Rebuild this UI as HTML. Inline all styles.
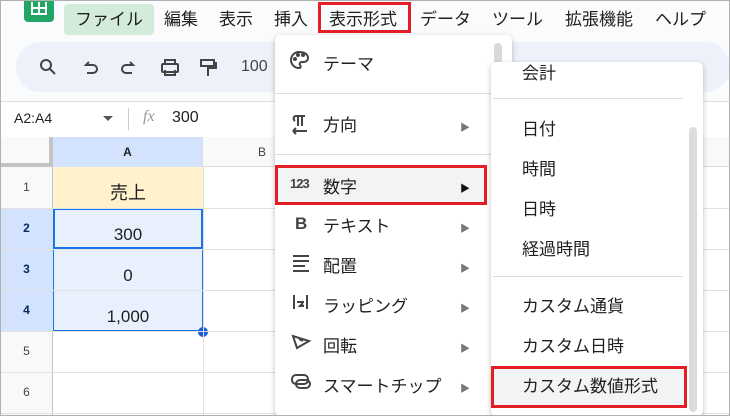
<!DOCTYPE html>
<html><head><meta charset="utf-8"><style>
*{box-sizing:border-box;margin:0;padding:0}
body{width:730px;height:416px;overflow:hidden;position:relative;background:#f9fbfd;font-family:"Liberation Sans","Noto Sans CJK JP",sans-serif;color:#1f1f1f}
.a{position:absolute}
.mb{font-size:17px;top:5px;color:#1f1f1f}
.frame{position:absolute;left:0;top:0;width:730px;height:416px;border:1px solid #b0b0b0;pointer-events:none}
.mi{position:absolute;left:0;width:100%;font-size:17px}
.arr{position:absolute;left:185px;font-size:10px;color:#777}
.sep{position:absolute;height:1px;background:#dadce0}
.rh{position:absolute;left:0;width:53px;font-size:12px;text-align:center;color:#444}
</style></head><body>
<div class="a" style="left:24px;top:0;width:30px;height:22px;background:#23a566;border-radius:0 0 4px 4px"></div>
<div class="a" style="left:31px;top:2px;width:16px;height:13px;border:2px solid #fff;border-top:none"></div>
<div class="a" style="left:31px;top:7px;width:16px;height:2px;background:#fff"></div>
<div class="a" style="left:38px;top:2px;width:2px;height:12px;background:#fff"></div>
<div class="a" style="left:64px;top:4px;width:90px;height:31px;background:#d3ebd9;border-radius:4px"></div>
<div class="a mb" style="left:75px">ファイル</div>
<div class="a mb" style="left:164px">編集</div>
<div class="a mb" style="left:219px">表示</div>
<div class="a mb" style="left:274px">挿入</div>
<div class="a mb" style="left:329px">表示形式</div>
<div class="a" style="left:318px;top:2px;width:93px;height:31px;border:3px solid #e31e24"></div>
<div class="a mb" style="left:420px">データ</div>
<div class="a mb" style="left:492px">ツール</div>
<div class="a mb" style="left:565px">拡張機能</div>
<div class="a mb" style="left:655px">ヘルプ</div>
<div class="a" style="left:16px;top:42px;width:714px;height:50px;background:#edf2fa;border-radius:25px"></div>
<svg class="a" style="left:36px;top:56px" width="240" height="24" viewBox="0 0 240 24" fill="none" stroke="#444" stroke-width="2">
<circle cx="10" cy="9" r="5"/><path d="M14 13l5 5"/>
<path d="M56 9h-6l3-3M50 9h7a4 4 0 010 8h-6"/>
<path d="M91 9h6l-3-3M97 9h-7a4 4 0 000 8h6"/>
<rect x="126" y="8" width="16" height="8" rx="1"/><path d="M129 8V4h10v4M129 14v5h10v-5"/>
<rect x="165" y="4" width="13" height="6"/><path d="M178 7h2v5h-8v3M172 15v5"/>
</svg>
<div class="a" style="left:241px;top:58px;font-size:16px;color:#444">100</div>
<div class="a" style="left:0;top:101px;width:730px;height:36px;background:#fff;border-top:1px solid #e0e0e0"></div>
<div class="a" style="left:14px;top:110px;font-size:14px">A2:A4</div>
<div class="a" style="left:103px;top:116px;border:5px solid transparent;border-top:5px solid #555"></div>
<div class="a" style="left:128px;top:108px;width:1px;height:22px;background:#ccc"></div>
<div class="a" style="left:143px;top:108px;font-size:16px;color:#999;font-style:italic;font-family:'Liberation Serif',serif">fx</div>
<div class="a" style="left:172px;top:109px;font-size:16px">300</div>
<div class="a" style="left:0;top:137px;width:730px;height:279px;background:#fff"></div>
<div class="a" style="left:0;top:137px;width:53px;height:30px;background:#f8f9fa;border-right:4px solid #c4c4c4;border-bottom:4px solid #c4c4c4"></div>
<div class="a" style="left:53px;top:137px;width:150px;height:30px;background:#d3e3fd;border-right:1px solid #dadce0;font-size:12px;font-weight:bold;text-align:center;line-height:30px">A</div>
<div class="a" style="left:203px;top:137px;width:527px;height:30px;background:#f8f9fa;border-bottom:1px solid #dadce0;font-size:12px;line-height:30px;padding-left:55px;color:#444">B</div>
<div class="a" style="left:0;top:167px;width:53px;height:249px;background:#f8f9fa;border-right:1px solid #c4c4c4"></div>
<div class="a" style="left:0;top:208px;width:53px;height:123px;background:#d3e3fd"></div>
<div class="rh" style="top:180px">1</div><div class="rh" style="top:221px;font-weight:bold;color:#0b2a60">2</div><div class="rh" style="top:262px;font-weight:bold;color:#0b2a60">3</div><div class="rh" style="top:303px;font-weight:bold;color:#0b2a60">4</div><div class="rh" style="top:344px">5</div><div class="rh" style="top:385px">6</div>
<div class="a" style="left:53px;top:167px;width:150px;height:41px;background:#fff2cc"></div>
<div class="a" style="left:53px;top:208px;width:150px;height:123px;background:#e8f0fe;border:1px solid #1a73e8"></div>
<div class="a" style="left:53px;top:208px;width:150px;height:41px;border:2px solid #1a73e8"></div>
<div class="a" style="left:198px;top:327px;width:10px;height:10px;border-radius:50%;background:#1a5fd6"></div>
<svg class="a" style="left:0;top:167px" width="730" height="249"><g stroke="#e1e1e1"><path d="M0 41.5H730M0 82.5H730M0 123.5H730M0 164.5H730M0 205.5H730M0 246.5H730M203.5 0V249"/></g></svg>
<div class="a" style="left:53px;top:179px;width:150px;text-align:center;font-size:18px">売上</div>
<div class="a" style="left:53px;top:225px;width:150px;text-align:center;font-size:17px">300</div>
<div class="a" style="left:53px;top:266px;width:150px;text-align:center;font-size:17px">0</div>
<div class="a" style="left:53px;top:307px;width:150px;text-align:center;font-size:17px">1,000</div>
<div class="a" style="left:275px;top:35px;width:237px;height:381px;background:#fff;border-radius:6px;box-shadow:0 2px 6px rgba(0,0,0,.25)">
<div class="a" style="left:219px;top:8px;width:8px;height:22px;background:#d9d9d9;border-radius:4px"></div>
<div class="mi" style="top:15px;left:48px">テーマ</div>
<div class="sep" style="left:0;width:220px;top:58px"></div>
<div class="mi" style="top:76px;left:48px">方向</div><div class="arr" style="top:84px">▶</div>
<div class="sep" style="left:0;width:220px;top:119px"></div>
<div class="a" style="left:0;top:130px;width:212px;height:40px;background:#f1f3f4;border:3px solid #e31e24"></div>
<div class="a" style="left:15px;top:141px;font-size:13px;font-weight:bold;color:#444;letter-spacing:-1px">123</div>
<div class="mi" style="top:138px;left:48px">数字</div><div class="arr" style="top:145px;color:#111">▶</div>
<div class="a" style="left:20px;top:179px;font-size:17px;font-weight:bold;color:#444">B</div>
<div class="mi" style="top:177px;left:48px">テキスト</div><div class="arr" style="top:185px">▶</div>
<div class="mi" style="top:217px;left:48px">配置</div><div class="arr" style="top:225px">▶</div>
<div class="mi" style="top:257px;left:48px">ラッピング</div><div class="arr" style="top:265px">▶</div>
<div class="mi" style="top:297px;left:48px">回転</div><div class="arr" style="top:305px">▶</div>
<div class="mi" style="top:337px;left:48px">スマートチップ</div><div class="arr" style="top:345px">▶</div>
<svg class="a" style="left:14px;top:14px" width="24" height="350" fill="none" stroke="#444" stroke-width="2">
<path d="M10 3a8 8 0 100 16c2 0 2-2 1-3s0-3 2-3h2a4 4 0 004-4c0-4-4-6-9-6z"/><circle cx="6" cy="10" r="1"/><circle cx="9" cy="6" r="1"/><circle cx="14" cy="6" r="1"/>
<path d="M6 67h10M9 67v10M13 67v10M6 72a3 3 0 010-5M4 82h14M4 82l3-3M4 82l3 3"/>
<path d="M4 207h16M4 212h16M4 217h12M4 222h16"/>
<path d="M5 246v14M18 246v14M8 253h7a2 2 0 000 4h-4l2-2"/>
<path d="M4 287l4 12 12-7zM10 290l4 2"/>
<rect x="3" y="326" width="16" height="9" rx="4"/><rect x="7" y="331" width="14" height="8" rx="4"/>
</svg>
</div>
<div class="a" style="left:491px;top:62px;width:212px;height:354px;background:#fff;border-radius:6px;box-shadow:0 2px 6px rgba(0,0,0,.25)">
<div class="a" style="left:198px;top:65px;width:8px;height:285px;background:#dadce0;border-radius:4px"></div>
<div class="mi" style="top:-3px;left:31px">会計</div>
<div class="sep" style="left:2px;width:190px;top:36px"></div>
<div class="mi" style="top:53px;left:31px">日付</div>
<div class="mi" style="top:93px;left:31px">時間</div>
<div class="mi" style="top:133px;left:31px">日時</div>
<div class="mi" style="top:173px;left:31px">経過時間</div>
<div class="sep" style="left:2px;width:190px;top:214px"></div>
<div class="mi" style="top:230px;left:31px">カスタム通貨</div>
<div class="mi" style="top:270px;left:31px">カスタム日時</div>
<div class="a" style="left:0;top:304px;width:196px;height:42px;background:#f1f3f4;border:3px solid #e31e24"></div>
<div class="mi" style="top:310px;left:31px">カスタム数値形式</div>
</div>
<div class="frame"></div>
</body></html>
